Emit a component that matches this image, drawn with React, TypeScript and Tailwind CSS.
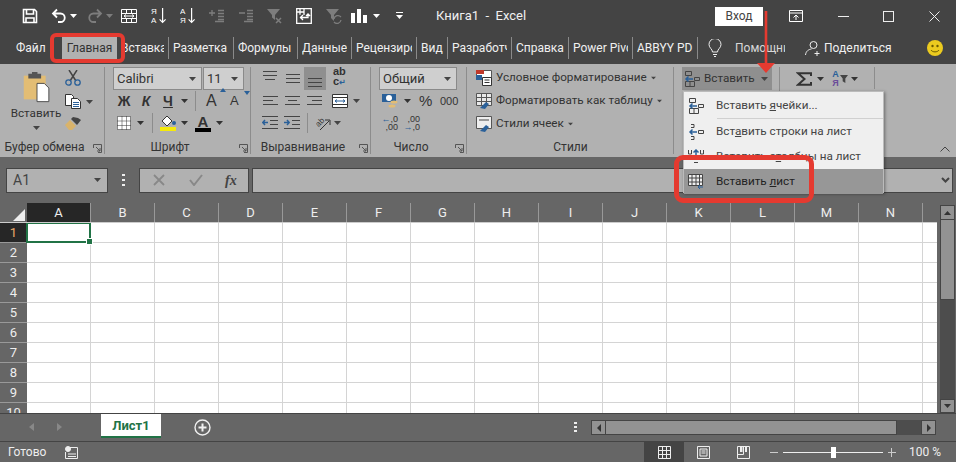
import React from "react";

const TABS = [
  { label: "Вставка", w: "w-[52px]" },
  { label: "Разметка страницы", w: "w-[65px]" },
  { label: "Формулы", w: "w-[64px]" },
  { label: "Данные", w: "w-[54px]" },
  { label: "Рецензирование", w: "w-[65px]" },
  { label: "Вид", w: "w-[31px]" },
  { label: "Разработчик", w: "w-[64px]" },
  { label: "Справка", w: "w-[57px]" },
  { label: "Power Pivot", w: "w-[64px]" },
  { label: "ABBYY PDF", w: "w-[65px]" },
];

const COLS = ["A", "B", "C", "D", "E", "F", "G", "H", "I", "J", "K", "L", "M", "N"];
const ROWS = [1, 2, 3, 4, 5, 6, 7, 8, 9, 10];

function Caret({ className = "" }: { className?: string }) {
  return (
    <svg viewBox="0 0 7 4" className={"h-[4px] w-[7px] shrink-0 " + className} fill="currentColor">
      <path d="M0 0h7L3.5 4z" />
    </svg>
  );
}

function Launcher({ className = "" }: { className?: string }) {
  return (
    <svg viewBox="0 0 9 9" className={"h-[9px] w-[9px] shrink-0 text-[#555] " + className} fill="none" stroke="currentColor">
      <path d="M.5 4V.5h8v8H5M3 3l4 4M7 4v3H4" />
    </svg>
  );
}

function Lines({ rows, className = "" }: { rows: number[][]; className?: string }) {
  return (
    <svg viewBox="0 0 16 16" className={"h-4 w-4 shrink-0 text-[#444] " + className} fill="none" stroke="currentColor">
      {rows.map(([y, a, b]) => (
        <path key={`${y}-${a}`} d={`M${a} ${y + 0.5}H${b}`} />
      ))}
    </svg>
  );
}

function Combo({ label, className }: { label: string; className: string }) {
  return (
    <div className={"flex h-[23px] items-center justify-between border border-[#8a8a8a] bg-[#cfcfcf] pl-[3px] pr-[5px] text-[13px] text-[#333] " + className}>
      <span>{label}</span>
      <Caret className="text-[#444]" />
    </div>
  );
}

function Group({ w, label, launcher = false, children }: { w: string; label: string; launcher?: boolean; children: React.ReactNode }) {
  return (
    <div className={"relative flex h-full shrink-0 flex-col " + w}>
      <div className="h-[75px]">{children}</div>
      <div className={"flex h-[18px] items-center justify-center pb-[2px] text-[12px] text-[#333] " + (launcher ? "pr-[16px]" : "")}>{label}</div>
      {launcher ? <Launcher className="absolute bottom-[4px] right-[3px]" /> : null}
      <div className="absolute right-0 top-[3px] h-[87px] w-px bg-[#8c8c8c]" />
    </div>
  );
}

function TitleIcons() {
  return (
    <div className="flex items-center text-white">
      <svg viewBox="0 0 16 16" className="ml-[22px] h-4 w-4" fill="none" stroke="currentColor" strokeWidth="1.6">
        <path d="M1.5 1.5h11l2 2v11h-13zM4.5 2v4h7V2M4 15v-5h8v5" />
      </svg>
      <svg viewBox="0 0 16 16" className="ml-[13px] h-4 w-4" fill="none" stroke="currentColor" strokeWidth="1.8">
        <path d="M6 1.5 2 5.5l4 4M2 5.5h7.5a4 4 0 0 1 0 8.5H7" />
      </svg>
      <Caret className="ml-[3px]" />
      <svg viewBox="0 0 16 16" className="ml-[10px] h-4 w-4 text-[#7d7d7d]" fill="none" stroke="currentColor" strokeWidth="1.8">
        <path d="M10 1.5l4 4-4 4M14 5.5H6.500a4 4 0 0 0 0 8.500H9" />
      </svg>
      <Caret className="ml-[3px] text-[#7d7d7d]" />
      <svg viewBox="0 0 16 16" className="ml-[8px] h-4 w-4" fill="none" stroke="currentColor">
        <path d="M.5 1.500h15v13H.5zM.5 5.500h15M.5 10.500h15M3 8h10M5 6.500 3 8l2 1.500M11 6.500 13 8l-2 1.500M5.500 1.500v4M10.500 1.500v4M5.500 10.500v4M10.500 10.500v4" />
      </svg>
      <svg viewBox="0 0 16 18" className="ml-[14px] h-[18px] w-4" fill="currentColor" fontSize="8" fontFamily="Liberation Sans">
        <text x="0" y="7">Я</text>
        <text x="0" y="16">А</text>
        <path d="M11 1h1.200v13l2-2 .8.800-3.400 3.400-3.400-3.400.8-.8 2 2z" />
      </svg>
      <svg viewBox="0 0 16 18" className="ml-[13px] h-[18px] w-4" fill="currentColor" fontSize="8" fontFamily="Liberation Sans">
        <text x="0" y="7">А</text>
        <text x="0" y="16">Я</text>
        <path d="M11 1h1.200v13l2-2 .8.800-3.400 3.400-3.400-3.400.8-.8 2 2z" />
      </svg>
      <svg viewBox="0 0 16 16" className="ml-[13px] h-4 w-4 text-[#7d7d7d]" fill="none" stroke="currentColor" strokeWidth="1.300">
        <path d="M0 5h6M3 2v6M9 2.500h6M9 5.500h6M9 8.500h6M9 11.500h6M6 13.500h9" />
      </svg>
      <svg viewBox="0 0 16 16" className="ml-[13px] h-4 w-4 text-[#7d7d7d]" fill="none" stroke="currentColor" strokeWidth="1.300">
        <path d="M1 5h6M9 2.500h6M9 5.500h6M9 8.500h6M9 11.500h6M6 13.500h9" />
      </svg>
      <svg viewBox="0 0 16 16" className="ml-[13px] h-4 w-4 text-[#7d7d7d]" fill="currentColor">
        <path d="M0 1h13L8 7v5L5 9.500V7z" />
        <path d="M9 10l5 5M14 10l-5 5" fill="none" stroke="currentColor" strokeWidth="1.500" />
      </svg>
      <svg viewBox="0 0 16 16" className="ml-[13px] h-4 w-4" fill="none" stroke="currentColor" strokeWidth="1.300">
        <path d="M.7.700h14.600v14.600H.7zM4 .7v6M.7 4H8M8 .7V7M4 9.500h8V6M10 8l2-2 2 2M7 12l-2.500-2.500L7 7" />
      </svg>
      <svg viewBox="0 0 16 16" className="ml-[14px] h-4 w-4 text-[#7d7d7d]" fill="currentColor">
        <path d="M0 1h13L8 7v6L5 10V7z" />
        <path d="M8 11a4 4 0 0 1 7-2M15 12a4 4 0 0 1-7 2" fill="none" stroke="currentColor" strokeWidth="1.300" />
      </svg>
      <svg viewBox="0 0 16 16" className="ml-[9px] h-4 w-4" fill="currentColor">
        <path d="M0 5h4v10H0zM6 1h4v14H6zM12 7h4v8h-4z" />
      </svg>
      <Caret className="ml-[6px]" />
      <svg viewBox="0 0 7 8" className="ml-[16px] h-2 w-[7px]" fill="currentColor">
        <path d="M0 0h7v1H0zM0 3h7L3.500 7z" />
      </svg>
    </div>
  );
}

function WindowControls() {
  return (
    <div className="flex items-center text-white">
      <svg viewBox="0 0 14 12" className="ml-[26px] h-3 w-[14px]" fill="none" stroke="currentColor">
        <path d="M.5.500h13v11H.5zM.5 3h13M7 10V5M4.500 7.500 7 5l2.500 2.500" />
      </svg>
      <div className="ml-[35px] h-px w-[11px] bg-[#eee]" />
      <div className="ml-[34px] h-[11px] w-[11px] border border-[#eee]" />
      <svg viewBox="0 0 11 11" className="ml-[35px] h-[11px] w-[11px]" fill="none" stroke="#eee">
        <path d="M.5.500l10 10M10.500.500l-10 10" />
      </svg>
    </div>
  );
}

function TabRow() {
  return (
    <div className="flex h-[32px] items-center text-[12px] text-[#f0f0f0]">
      <div className="ml-[16px] w-[46px]">Файл</div>
      <div className="flex h-[23px] w-[55px] items-center justify-center bg-[#b1b1b1] text-[#333]">Главная</div>
      {TABS.map((t) => (
        <div key={t.label} className={"flex h-[22px] items-center overflow-hidden whitespace-nowrap border-r border-[#8a8a8a] pl-[4px] pr-[4px] " + t.w}>
          <span className="block w-full overflow-hidden">{t.label}</span>
        </div>
      ))}
      <svg viewBox="0 0 14 18" className="ml-[10px] h-[18px] w-[14px]" fill="none" stroke="#eee">
        <path d="M4.500 13c0-3-3.500-4-3.500-7.500a6 6 0 0 1 12 0C13 9 9.500 10 9.500 13zM5 15.500h4M6 17.500h2" />
      </svg>
      <span className="ml-[13px] w-[50px] overflow-hidden whitespace-nowrap text-[#d8d8d8]">Помощник</span>
      <svg viewBox="0 0 16 16" className="ml-[20px] h-4 w-4" fill="none" stroke="#eee">
        <path d="M5 5a3.500 3.500 0 1 0 7 0 3.500 3.500 0 1 0-7 0zM.5 15c.5-4 3-5.500 6-6M12 11v5M9.500 13.500h5" />
      </svg>
      <span className="ml-[3px] w-[65px] whitespace-nowrap text-[#f0f0f0]">Поделиться</span>
      <svg viewBox="0 0 16 16" className="ml-[38px] h-4 w-4">
        <circle cx="8" cy="8" r="8" fill="#eccb1f" />
        <circle cx="5.500" cy="6" r="1.200" fill="#6b5a00" />
        <circle cx="10.500" cy="6" r="1.200" fill="#6b5a00" />
        <path d="M4 10c1.500 2.500 6.500 2.500 8 0" fill="none" stroke="#6b5a00" />
      </svg>
    </div>
  );
}

function ClipboardGroup() {
  return (
    <Group w="w-[105px]" label="Буфер обмена" launcher>
      <div className="flex">
        <div className="ml-[11px] flex w-[50px] flex-col items-center">
          <svg viewBox="0 0 29 34" className="ml-[2px] mt-[8px] h-[31px] w-[28px]">
            <path d="M0 4h24v26H0z" fill="#e3bd74" />
            <path d="M5 2h4V0h6v2h4v5H5z" fill="#555" />
            <path d="M14.500 12.500h8l5 5v15h-13z" fill="#fff" stroke="#444" />
          </svg>
          <span className="mt-[1px] text-[11.7px] leading-[18px] text-[#333]">Вставить</span>
          <Caret className="mt-[4px] text-[#444]" />
        </div>
        <div className="ml-[4px] flex flex-col">
          <svg viewBox="0 0 16 16" className="mt-[6px] h-4 w-4" fill="none">
            <path d="M4 0l7 11M12 0L5 11" stroke="#444" strokeWidth="1.500" />
            <circle cx="3.500" cy="12.500" r="2.700" stroke="#2a6099" strokeWidth="1.300" />
            <circle cx="12.500" cy="12.500" r="2.700" stroke="#2a6099" strokeWidth="1.300" />
          </svg>
          <div className="mt-[8px] flex items-center">
            <svg viewBox="0 0 16 15" className="h-[15px] w-4" fill="#fff" stroke="#333">
              <path d="M.5.500h6l2 2v9h-8z" />
              <path d="M6.500 4.500h6l3 3v7h-9z" />
              <path d="M8 8.500h6M8 10.500h6M8 12.500h6" stroke="#2a6099" />
            </svg>
            <Caret className="ml-[5px] text-[#444]" />
          </div>
          <svg viewBox="0 0 16 13" className="mt-[8px] h-[13px] w-4">
            <path d="M0 8l5-5 6 6-4 4H4z" fill="#d9b36a" />
            <path d="M6 2l2-2 5 1 3 2-4 5z" fill="#444" />
          </svg>
        </div>
      </div>
    </Group>
  );
}

function FontGroup() {
  return (
    <Group w="w-[146px]" label="Шрифт" launcher>
      <div className="ml-[8px] mt-[3px] flex">
        <Combo label="Calibri" className="w-[89px]" />
        <Combo label="11" className="ml-px w-[41px]" />
      </div>
      <div className="ml-[8px] mt-px flex h-[20px] items-center text-[#333]">
        <span className="w-[22px] text-center font-['Liberation_Sans'] text-[14px] font-bold">Ж</span>
        <span className="w-[22px] text-center font-['Liberation_Sans'] text-[14px] font-bold italic">К</span>
        <span className="w-[22px] text-center font-['Liberation_Sans'] text-[14px] font-bold underline">Ч</span>
        <Caret className="ml-[2px]" />
        <div className="ml-[7px] h-[20px] w-px bg-[#8c8c8c]" />
        <span className="relative ml-[10px] w-[20px] font-['Liberation_Sans'] text-[16px]">
          А
          <svg viewBox="0 0 6 4" className="absolute -top-[1px] right-0 h-1 w-[6px]" fill="#2a6099">
            <path d="M0 4l3-4 3 4z" />
          </svg>
        </span>
        <span className="relative ml-[4px] w-[20px] font-['Liberation_Sans'] text-[13px]">
          А
          <svg viewBox="0 0 6 4" className="absolute top-0 right-0 h-1 w-[6px]" fill="#2a6099">
            <path d="M0 0l3 4 3-4z" />
          </svg>
        </span>
      </div>
      <div className="ml-[12px] mt-[2px] flex h-[20px] items-center text-[#333]">
        <svg viewBox="0 0 14 14" className="h-[14px] w-[14px]" fill="#fff" stroke="#333" strokeDasharray="1 1">
          <path d="M.5.500h13v13H.5zM.5 5h13M.5 9.500h13M5 .5v13M9.500 .5v13" />
        </svg>
        <Caret className="ml-[6px]" />
        <div className="ml-[8px] h-[20px] w-px bg-[#8c8c8c]" />
        <div className="ml-[7px] flex w-[16px] flex-col items-center">
          <svg viewBox="0 0 16 12" className="h-3 w-4">
            <path d="M2 6l5-5 5 5-5 5z" fill="#fff" stroke="#333" />
            <circle cx="14" cy="8" r="2" fill="#2a6099" />
          </svg>
          <div className="h-[4px] w-[16px] bg-[#f5ea0a]" />
        </div>
        <Caret className="ml-[5px]" />
        <div className="ml-[7px] flex w-[16px] flex-col items-center font-['Liberation_Sans'] text-[15px] font-bold leading-[13px]">
          А
          <div className="h-[4px] w-[16px] bg-black" />
        </div>
        <Caret className="ml-[5px]" />
      </div>
    </Group>
  );
}

function AlignGroup() {
  return (
    <Group w="w-[120px]" label="Выравнивание" launcher>
      <div className="ml-[12px] flex h-[27px] items-start">
        <Lines className="mt-[6px]" rows={[[1, 0, 14], [5, 0, 14], [9, 2, 12]]} />
        <Lines className="ml-[6px] mt-[8px]" rows={[[2, 1, 15], [6, 1, 15], [10, 1, 15]]} />
        <div className="ml-[3px] mt-[3px] flex h-[23px] w-[22px] items-end justify-center bg-[#8f8f8f] pb-[2px]">
          <Lines rows={[[6, 1, 15], [10, 1, 15], [14, 1, 15]]} />
        </div>
        <div className="ml-[7px] mt-[3px] flex w-[14px] flex-col font-['Liberation_Sans'] text-[11px] font-bold leading-[9px] text-[#333]">
          <span>ab</span>
          <span className="mt-[1px]">
            c<span className="text-[8px] text-[#2a6099]">↵</span>
          </span>
        </div>
      </div>
      <div className="ml-[12px] flex h-[20px] items-center">
        <Lines rows={[[3, 0, 15], [7, 0, 10], [11, 0, 15]]} />
        <Lines className="ml-[6px]" rows={[[3, 0, 15], [7, 3, 12], [11, 0, 15]]} />
        <Lines className="ml-[6px]" rows={[[3, 0, 15], [7, 5, 15], [11, 0, 15]]} />
        <svg viewBox="0 0 16 14" className="ml-[9px] h-[14px] w-4" fill="#fff" stroke="#333">
          <path d="M.5.500h15v13H.5zM.5 3.500h15M.5 10.500h15" />
          <path d="M3 7h10M5 5.500 3 7l2 1.500M11 5.500 13 7l-2 1.500" stroke="#2a6099" fill="none" />
        </svg>
        <Caret className="ml-[5px] text-[#444]" />
      </div>
      <div className="ml-[11px] mt-[2px] flex h-[20px] items-center">
        <svg viewBox="0 0 16 14" className="h-[14px] w-4" fill="none" stroke="#444">
          <path d="M0 .5h16M8 4.500h8M8 8.500h8M0 12.500h16" />
          <path d="M6 6.500H1M3 4 .8 6.500 3 9" stroke="#2a6099" strokeWidth="1.500" />
        </svg>
        <svg viewBox="0 0 16 14" className="ml-[6px] h-[14px] w-4" fill="none" stroke="#444">
          <path d="M0 .5h16M8 4.500h8M8 8.500h8M0 12.500h16" />
          <path d="M0 6.500h5M3 4l2.200 2.500L3 9" stroke="#2a6099" strokeWidth="1.500" />
        </svg>
        <div className="ml-[7px] h-[20px] w-px bg-[#8c8c8c]" />
        <svg viewBox="0 0 15 15" className="ml-[8px] h-[15px] w-[15px]" fill="none" stroke="#333">
          <text x="0" y="9" fontSize="8" fill="#333" stroke="none" fontFamily="Liberation Sans" transform="rotate(-45 4 7)">ab</text>
          <path d="M4 14 13 5M9 4h5v5" />
        </svg>
        <Caret className="ml-[3px] text-[#444]" />
      </div>
    </Group>
  );
}

function NumberGroup() {
  return (
    <Group w="w-[96px]" label="Число" launcher>
      <div className="ml-[8px] mt-[3px]">
        <Combo label="Общий" className="w-[78px]" />
      </div>
      <div className="ml-[11px] mt-px flex h-[20px] items-center text-[#333]">
        <svg viewBox="0 0 16 16" className="h-4 w-4">
          <path d="M0 1h14v8H0z" fill="#2a6099" />
          <ellipse cx="7" cy="5" rx="3" ry="3" fill="#fff" />
          <ellipse cx="12" cy="9" rx="3.500" ry="1.500" fill="#e3bd74" />
          <ellipse cx="10" cy="13" rx="3.500" ry="1.500" fill="#e3bd74" />
        </svg>
        <Caret className="ml-[6px]" />
        <span className="ml-[8px] w-[15px] font-['Liberation_Sans'] text-[15px]">%</span>
        <span className="ml-[6px] font-['Liberation_Sans'] text-[11px]">000</span>
      </div>
      <div className="ml-[11px] mt-[2px] flex h-[20px] items-center font-['Liberation_Sans'] text-[9px] leading-[8px] text-[#333]">
        <div className="flex w-[16px] flex-col items-end">
          <span><span className="text-[#2a6099]">←</span>,0</span>
          <span>,00</span>
        </div>
        <div className="ml-[6px] flex w-[16px] flex-col items-end">
          <span>,00</span>
          <span><span className="text-[#2a6099]">→</span>,0</span>
        </div>
      </div>
    </Group>
  );
}

function StyleLine({ label, children }: { label: string; children: React.ReactNode }) {
  return (
    <div className="flex h-[22px] items-center">
      {children}
      <span className="ml-[4px] whitespace-nowrap text-[11.7px] text-[#333]">{label}</span>
      <Caret className="ml-[3px] scale-75 text-[#444]" />
    </div>
  );
}

function StylesGroup() {
  return (
    <Group w="w-[207px]" label="Стили">
      <div className="ml-[9px] mt-[3px] flex flex-col gap-px">
        <StyleLine label="Условное форматирование">
          <svg viewBox="0 0 16 16" className="h-4 w-4 shrink-0">
            <path d="M.5.500h15v9H.5z" fill="#fff" stroke="#555" />
            <path d="M0 0h8v4H0z" fill="#c0392b" />
            <path d="M0 5h6v5H0z" fill="#2a6099" />
            <path d="M6.500 7.500h9v8h-9z" fill="#fff" stroke="#333" />
            <path d="M8.500 10h5M8.500 12.500h5" stroke="#333" />
          </svg>
        </StyleLine>
        <StyleLine label="Форматировать как таблицу">
          <svg viewBox="0 0 16 16" className="h-4 w-4 shrink-0" fill="#e8e8e8" stroke="#555">
            <path d="M.5.500h15v12H.5zM.5 4.500h15M.5 8.500h15M5.500 .5v12M10.500 .5v12" />
            <path d="M4 15l6-6 3 2-4 5z" fill="#2a6099" stroke="none" />
          </svg>
        </StyleLine>
        <StyleLine label="Стили ячеек">
          <svg viewBox="0 0 16 16" className="h-4 w-4 shrink-0" fill="#eee" stroke="#555">
            <path d="M.5.500h15v12H.5z" />
            <path d="M3 3h10v2H3z" fill="#999" stroke="none" />
            <path d="M4 15l6-6 3 2-4 5z" fill="#2a6099" stroke="none" />
          </svg>
        </StyleLine>
      </div>
    </Group>
  );
}

function InsertIcon() {
  return (
    <svg viewBox="0 0 16 16" className="h-4 w-4 shrink-0" fill="none" stroke="#444">
      <path d="M1.500.500h6v4h-6zM1.500 10.500h9v5h-9zM6 10.500v5M10.500 6.500h5v3h-5z" />
      <path d="M9 8H2M4.500 5.500 2 8l2.500 2.500" stroke="#2a6099" strokeWidth="1.500" />
    </svg>
  );
}

function Item({ icon, children, active = false }: { icon: React.ReactNode; children: React.ReactNode; active?: boolean }) {
  return (
    <div className={"flex h-[25px] items-center pl-[4px] text-[11.7px] " + (active ? "bg-[#979797] text-[#222]" : "text-[#444]")}>
      <div className="w-4 shrink-0">{icon}</div>
      <span className="ml-[12px] whitespace-nowrap">{children}</span>
    </div>
  );
}

function CellsGroup() {
  return (
    <div className="relative h-full w-[106px] shrink-0">
      <div className="ml-[8px] mt-[3px] flex h-[23px] w-[90px] items-center bg-[#8f8f8f] pl-[2px] text-[11.7px] text-[#333]">
        <InsertIcon />
        <span className="ml-[4px] w-[57px]">Вставить</span>
        <Caret className="text-[#444]" />
      </div>
      <div className="absolute right-0 top-[3px] h-[87px] w-px bg-[#8c8c8c]" />
      <div className="absolute left-[9px] top-[27px] z-20 h-[102px] w-[201px] border border-[#bbb] bg-[#efefef] py-px shadow-[1px_1px_3px_rgba(0,0,0,0.4)]">
        <Item icon={<InsertIcon />}>
          Вставить <span className="underline">я</span>чейки...
        </Item>
        <div className="ml-[33px] h-px bg-[#d0d0d0]" />
        <Item icon={
          <svg viewBox="0 0 16 16" className="h-4 w-4" fill="none" stroke="#444">
            <path d="M3 .5h3v3H3M3 12.500h3v3H3M10.500 6.500h5v3h-5z" />
            <path d="M9 8H2M4.500 5.500 2 8l2.500 2.500" stroke="#2a6099" strokeWidth="1.500" />
          </svg>
        }>
          Вст<span className="underline">а</span>вить строки на лист
        </Item>
        <Item icon={
          <svg viewBox="0 0 16 16" className="h-4 w-4" fill="none" stroke="#444">
            <path d="M.5 1v4h3V1M12.500 1v4h3V1M6 13.500h4" />
            <path d="M8 9V1M5.500 3.500 8 1l2.500 2.500" stroke="#2a6099" strokeWidth="1.500" />
          </svg>
        }>
          Вставить с<span className="underline">т</span>олбцы на лист
        </Item>
        <Item active icon={
          <svg viewBox="0 0 16 16" className="h-4 w-4" fill="#efefef" stroke="#444">
            <path d="M.5.500h14v11H.5zM.5 4h14M.5 8h14M4 .5v11M8 .5v11M11.500 .5v11" />
            <path d="M15 13H10M12 11l-2 2 2 2" stroke="#2a6099" fill="none" />
          </svg>
        }>
          Вставить <span className="underline">л</span>ист
        </Item>
      </div>
    </div>
  );
}

function EditGroup() {
  return (
    <div className="relative h-full w-[95px] shrink-0">
      <div className="ml-[16px] mt-[6px] flex h-[18px] items-center text-[#333]">
        <svg viewBox="0 0 16 14" className="h-[14px] w-4" fill="none" stroke="#333" strokeWidth="2">
          <path d="M15 4V1.200H2L8.500 7 2 12.800h13V10" />
        </svg>
        <Caret className="ml-[5px]" />
        <div className="ml-[7px] flex w-[9px] flex-col items-center font-['Liberation_Sans'] text-[9px] font-bold leading-[9px]">
          <span className="text-[#2a6099]">А</span>
          <span className="text-[#6b4c9a]">Я</span>
        </div>
        <svg viewBox="0 0 9 9" className="h-[8px] w-[8px]" fill="#444">
          <path d="M0 0h9L6 4v5L3 7V4z" />
        </svg>
        <Caret className="ml-[3px]" />
      </div>
      <div className="absolute right-0 top-[3px] h-[22px] w-px bg-[#8c8c8c]" />
    </div>
  );
}

function Ribbon() {
  return (
    <div className="relative flex h-[93px] bg-[#b1b1b1]">
      <ClipboardGroup />
      <FontGroup />
      <AlignGroup />
      <NumberGroup />
      <StylesGroup />
      <CellsGroup />
      <EditGroup />
      <svg viewBox="0 0 10 6" className="absolute bottom-[5px] right-[6px] h-[6px] w-[10px]" fill="none" stroke="#444">
        <path d="M.5 5.500 5 1l4.500 4.500" />
      </svg>
    </div>
  );
}

function FormulaBar() {
  return (
    <div className="flex h-[46px] items-center bg-[#666] pl-[6px] pr-[3px]">
      <div className="flex h-[25px] w-[102px] items-center justify-between border border-[#444] bg-[#b1b1b1] pl-[6px] pr-[6px] text-[14px] text-[#444]">
        <span>A1</span>
        <Caret className="text-[#444]" />
      </div>
      <div className="ml-[14px] flex w-[3px] flex-col gap-[3px]">
        <span className="h-[2px] w-[3px] bg-[#eee]" />
        <span className="h-[2px] w-[3px] bg-[#eee]" />
        <span className="h-[2px] w-[3px] bg-[#eee]" />
      </div>
      <div className="ml-[14px] flex h-[25px] w-[110px] items-center border border-[#444] bg-[#b1b1b1] text-[#888]">
        <svg viewBox="0 0 12 12" className="ml-[13px] h-3 w-3" fill="none" stroke="currentColor" strokeWidth="1.800">
          <path d="M1 1l10 10M11 1 1 11" />
        </svg>
        <svg viewBox="0 0 14 12" className="ml-[24px] h-3 w-[14px]" fill="none" stroke="currentColor" strokeWidth="2">
          <path d="M1 6l4 5 8-10" />
        </svg>
        <span className="ml-[22px] font-['Liberation_Serif'] text-[14px] font-bold italic text-[#444]">fx</span>
      </div>
      <div className="ml-[3px] flex h-[25px] flex-1 items-center justify-end border border-[#444] bg-[#b1b1b1] pr-[2px]">
        <svg viewBox="0 0 9 6" className="h-[6px] w-[9px]" fill="none" stroke="#444" strokeWidth="2">
          <path d="M1 1l3.500 3.500L8 1" />
        </svg>
      </div>
    </div>
  );
}

function Sheet() {
  return (
    <div className="flex h-[210px] bg-[#666]">
      <div className="flex w-[937px] flex-col overflow-hidden">
        <div className="flex h-[20px] shrink-0 border-b border-[#ccc] text-[13px] text-[#eee]">
          <div className="relative w-[27px] shrink-0">
            <svg viewBox="0 0 12 12" className="absolute bottom-[1px] right-[2px] h-3 w-3" fill="#eee">
              <path d="M12 0v12H0z" />
            </svg>
          </div>
          {COLS.map((c) => (
            <div key={c} className={"flex w-[64px] shrink-0 items-center justify-center border-r border-[#999] " + (c === "A" ? "bg-[#262626]" : "")}>
              {c}
            </div>
          ))}
        </div>
        <div className="h-[190px] overflow-hidden">
          {ROWS.map((r) => (
            <div key={r} className="flex h-[20px]">
              <div className={"flex w-[27px] shrink-0 items-center justify-center border-b border-[#999] text-[13px] " + (r === 1 ? "bg-[#262626] text-[#e8a868]" : "text-[#eee]")}>
                {r}
              </div>
              <div className="flex flex-1 bg-white">
                {COLS.map((c) => (
                  <div key={c} className="relative w-[64px] shrink-0 border-b border-r border-[#d4d4d4]">
                    {r === 1 && c === "A" ? (
                      <div className="absolute -left-px -top-px z-10 h-[21px] w-[65px] border-2 border-[#217346]">
                        <div className="absolute -bottom-[4px] -right-[4px] h-[7px] w-[7px] border border-white bg-[#217346]" />
                      </div>
                    ) : null}
                  </div>
                ))}
                <div className="flex-1 border-b border-[#d4d4d4]" />
              </div>
            </div>
          ))}
        </div>
      </div>
      <div className="ml-[3px] flex w-[15px] flex-col pt-[2px]">
        <div className="flex h-[15px] items-center justify-center border border-[#444] bg-[#929292] text-[#333]">
          <Caret className="rotate-180" />
        </div>
        <div className="h-[80px] border border-t-0 border-[#444] bg-[#929292]" />
        <div className="flex-1 bg-[#4d4d4d]" />
        <div className="flex h-[14px] items-center justify-center border border-[#444] bg-[#929292] text-[#333]">
          <Caret />
        </div>
      </div>
    </div>
  );
}

function SheetTabs() {
  return (
    <div className="flex h-[28px] items-start border-t border-[#444] bg-[#666]">
      <svg viewBox="0 0 5 8" className="ml-[29px] mt-[9px] h-2 w-[5px]" fill="#888"><path d="M5 0v8L0 4z" /></svg>
      <svg viewBox="0 0 5 8" className="ml-[23px] mt-[9px] h-2 w-[5px]" fill="#888"><path d="M0 0v8l5-4z" /></svg>
      <div className="ml-[39px] flex h-[24px] w-[60px] items-center justify-center border-b-[2px] border-[#217346] bg-white pt-[2px] text-[13px] font-bold text-[#217346]">
        Лист1
      </div>
      <svg viewBox="0 0 17 17" className="ml-[33px] mt-[5px] h-[17px] w-[17px]" fill="none" stroke="#f0f0f0">
        <circle cx="8.500" cy="8.500" r="7.500" strokeWidth="1.400" />
        <path d="M4.500 8.500h8M8.500 4.500v8" strokeWidth="2" />
      </svg>
      <div className="ml-[363px] mt-[8px] flex w-[3px] flex-col gap-[2px]">
        <span className="h-[2px] w-[3px] bg-[#eee]" />
        <span className="h-[2px] w-[3px] bg-[#eee]" />
        <span className="h-[2px] w-[3px] bg-[#eee]" />
      </div>
      <div className="ml-[14px] mt-[6px] flex h-[15px] w-[345px]">
        <div className="flex w-[15px] items-center justify-center border border-[#444] bg-[#929292]">
          <svg viewBox="0 0 4 8" className="h-2 w-1" fill="#333"><path d="M4 0v8L0 4z" /></svg>
        </div>
        <div className="w-[291px] border-y border-r border-[#444] bg-[#929292]" />
        <div className="flex-1 bg-[#4d4d4d]" />
        <div className="flex w-[15px] items-center justify-center border border-[#444] bg-[#929292]">
          <svg viewBox="0 0 4 8" className="h-2 w-1" fill="#333"><path d="M0 0v8l4-4z" /></svg>
        </div>
      </div>
    </div>
  );
}

function StatusBar() {
  return (
    <div className="flex h-[21px] items-center border-t border-[#444] bg-[#666] text-[12px] text-[#eee]">
      <span className="ml-[8px] w-[57px]">Готово</span>
      <svg viewBox="0 0 13 13" className="h-[13px] w-[13px]" fill="none" stroke="#eee">
        <circle cx="3" cy="3" r="2.500" fill="#eee" />
        <path d="M5 1.500h7.500v11H.5V6M3 8h8M3 10.500h8" />
      </svg>
      <div className="ml-[566px] flex h-full w-[40px] items-center justify-center bg-[#444]">
        <svg viewBox="0 0 13 13" className="h-[13px] w-[13px]" fill="none" stroke="#eee">
          <path d="M.5.500h12v12H.5zM.5 4.500h12M.5 8.500h12M4.500 .5v12M8.500 .5v12" />
        </svg>
      </div>
      <svg viewBox="0 0 13 13" className="ml-[13px] h-[13px] w-[13px]" fill="none" stroke="#eee">
        <path d="M.5.500h12v12H.5zM3 3h7v7H3zM4.500 5h4M4.500 7h4" />
      </svg>
      <svg viewBox="0 0 13 13" className="ml-[27px] h-[13px] w-[13px]" fill="none" stroke="#eee">
        <path d="M.5.500h12v12H.5zM.5 8.500h6V.5" />
        <path d="M3 0h2.500v6H3zM8 0h2v6H8z" fill="#eee" stroke="none" />
      </svg>
      <div className="ml-[20px] h-px w-[8px] bg-[#ccc]" />
      <div className="relative ml-[5px] h-px w-[100px] bg-[#eee]">
        <div className="absolute left-[48px] -top-[5px] h-[11px] w-[5px] bg-white" />
      </div>
      <div className="relative ml-[5px] h-px w-[8px] bg-[#ccc]">
        <div className="absolute left-[3px] -top-[4px] h-[9px] w-px bg-[#ccc]" />
      </div>
      <span className="ml-[13px] whitespace-nowrap">100 %</span>
    </div>
  );
}

export default function App() {
  return (
    <div className="relative h-[462px] w-[956px] overflow-hidden bg-[#444] font-['Roboto',sans-serif]">
      <div className="relative flex h-[32px] items-center">
        <TitleIcons />
        <span className="ml-[33px] w-[279px] whitespace-pre text-[13px] text-[#f0f0f0]">Книга1  -  Excel</span>
        <div className="flex h-[19px] w-[48px] items-center justify-center bg-white text-[12px] text-[#444]">Вход</div>
        <WindowControls />
      </div>
      <TabRow />
      <Ribbon />
      <FormulaBar />
      <Sheet />
      <SheetTabs />
      <StatusBar />

      {/* annotations over the screenshot */}
      <div className="absolute left-[50px] top-[33px] z-30 h-[30px] w-[75px] rounded-[6px] border-[4px] border-[#e53a30]" />
      <div className="absolute left-[674px] top-[155px] z-30 h-[48px] w-[140px] rounded-[9px] border-[5px] border-[#e53a30]" />
      <svg viewBox="0 0 20 62" className="absolute left-[756px] top-[11px] z-30 h-[62px] w-[20px]">
        <path d="M8.700 0h2.600v52H19l-9 10-9-10h7.700z" fill="#e53a30" />
      </svg>
    </div>
  );
}
